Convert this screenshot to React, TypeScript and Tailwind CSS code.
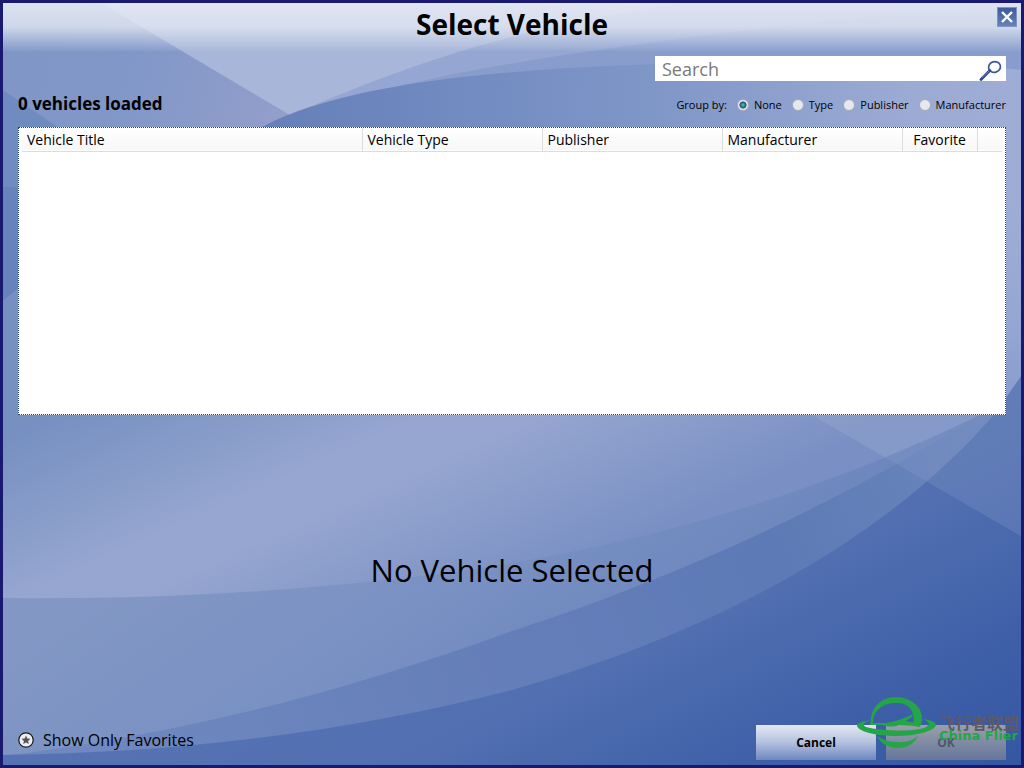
import React, { useState } from "react";

const GROUPS = ["None", "Type", "Publisher", "Manufacturer"];

const COLUMNS = [
	{ title: "Vehicle Title", className: "w-[340px] pl-[5px] text-left" },
	{ title: "Vehicle Type", className: "w-[180px] pl-[5px] text-left" },
	{ title: "Publisher", className: "w-[180px] pl-[5px] text-left" },
	{ title: "Manufacturer", className: "w-[180px] pl-[5px] text-left" },
	{ title: "Favorite", className: "w-[75px] text-center" },
];

function Backdrop() {
	return (
		<svg
			className="absolute inset-0 w-full h-full"
			viewBox="3 3 1018 762"
			preserveAspectRatio="none"
			aria-hidden="true">
			<defs>
				<linearGradient id="sky" gradientUnits="userSpaceOnUse" x1="0" y1="40" x2="300" y2="130">
					<stop offset="0" stopColor="#7f96c7" />
					<stop offset="0.4" stopColor="#8097c8" />
					<stop offset="1" stopColor="#959fcb" />
				</linearGradient>
				<linearGradient id="upper" gradientUnits="userSpaceOnUse" x1="20" y1="430" x2="164" y2="750">
					<stop offset="0" stopColor="#7690c1" />
					<stop offset="0.44" stopColor="#96a6d0" />
					<stop offset="0.56" stopColor="#96a6d0" />
					<stop offset="1" stopColor="#7a90c4" />
				</linearGradient>
				<linearGradient id="band1" gradientUnits="userSpaceOnUse" x1="150" y1="560" x2="350" y2="860">
					<stop offset="0" stopColor="#8297c4" />
					<stop offset="0.5" stopColor="#7a91c3" />
					<stop offset="1" stopColor="#6b86bc" />
				</linearGradient>
				<linearGradient id="band2" gradientUnits="userSpaceOnUse" x1="100" y1="750" x2="980" y2="430">
					<stop offset="0" stopColor="#6f88bf" />
					<stop offset="0.45" stopColor="#647eb9" />
					<stop offset="0.75" stopColor="#5d7ab6" />
					<stop offset="1" stopColor="#6b86bc" />
				</linearGradient>
				<linearGradient id="deep" gradientUnits="userSpaceOnUse" x1="500" y1="560" x2="700" y2="960">
					<stop offset="0" stopColor="#5572b3" />
					<stop offset="0.3" stopColor="#5270b1" />
					<stop offset="0.65" stopColor="#3f60a9" />
					<stop offset="1" stopColor="#3155a0" />
				</linearGradient>
				<linearGradient id="wing" gradientUnits="userSpaceOnUse" x1="300" y1="120" x2="1020" y2="140">
					<stop offset="0" stopColor="#6781ba" />
					<stop offset="0.5" stopColor="#8097c8" />
					<stop offset="0.85" stopColor="#9cabd4" />
					<stop offset="1" stopColor="#9fadd5" />
				</linearGradient>
				<linearGradient id="edge" x1="0" y1="0" x2="0" y2="1">
					<stop offset="0" stopColor="#a0aed6" stopOpacity="0" />
					<stop offset="1" stopColor="#869ccb" />
				</linearGradient>
			</defs>
			<rect x="0" y="0" width="1024" height="768" fill="url(#sky)" />
			<path d="M0 88L62 130V768H0Z" fill="#708bc0" />
			<path d="M0 187H62V310H0Z" fill="#6783bb" />
			<path d="M96 0L310 127H1024V0Z" fill="#a8b7d9" />
			<path d="M262 127C360 85 420 62 500 40C570 20 640 10 700 0H1024V200H262Z" fill="#94a6d1" />
			<path d="M262 127C400 75 560 55 700 36C840 18 920 12 1024 8V200H262Z" fill="#889dcc" />
			<path d="M262 127C350 80 520 69 655 64C780 58 920 62 1024 70V420H262Z" fill="url(#wing)" />
			<path d="M1000 150H1024V410H1000Z" fill="url(#edge)" />
			<path d="M0 303L200 140H262V410H1024V768H0Z" fill="url(#upper)" />
			<path d="M812 415L1024 538V410H812Z" fill="#9badd4" fillOpacity="0.3" />
			<path d="M0 598C160 600 300 591 440 574C660 545 850 480 985 412L1024 400V768H0Z" fill="url(#band1)" />
			<path d="M0 756C180 735 350 690 512 631C700 570 860 490 985 412L1024 400V768H0Z" fill="url(#band2)" />
			<path d="M0 755C180 753 350 732 512 690C740 625 900 525 996 412L1024 372V768H0Z" fill="url(#deep)" />
			<path d="M812 415L1024 538V372L996 412Z" fill="#8ba0cc" fillOpacity="0.25" />
		</svg>
	);
}

function SearchIcon() {
	return (
		<svg className="w-6 h-6" viewBox="0 0 24 24" fill="none" aria-hidden="true">
			<ellipse cx="16.500" cy="10" rx="6" ry="5.300" stroke="#3c5596" strokeWidth="1.700" transform="rotate(-15 16.500 10)" />
			<path d="M11.800 13.500L3 22.500" stroke="#2f4a8c" strokeWidth="2.800" strokeLinecap="round" />
			<path d="M11 14L4 20.500" stroke="#8fa3cd" strokeWidth="0.700" />
		</svg>
	);
}

function Watermark() {
	return (
		<div className="absolute right-[2px] bottom-[15px] flex items-end gap-[3px] pointer-events-none">
			<svg className="w-20 h-14" viewBox="856 694 80 56" fill="none" aria-hidden="true">
				<g fill="#23a548">
					<path d="M871 725C869 709 880 697 896 697C912 697 924 709 922 721L920 727L913 726C916 713 910 703 897 703C883 702 872 711 873 725Z" />
					<path d="M877 736C881 744 888 748 898 748C907 748 914 744 918 736C912 741 905 743 898 742C890 742 883 740 877 736Z" />
					<path d="M871 720C863 721 857 723 857 726C859 732 877 736 896 736C916 736 935 731 936 725C936 722 930 720 923 719C930 722 931 725 924 728C910 732 880 731 866 727C861 724 865 722 871 720Z" />
					<path d="M870 723H884C895 722 905 718 913 714L912 717L906 721L916 723V726L899 725C893 728 885 726 882 725H870Z" />
				</g>
			</svg>
			<div className="flex flex-col pb-2 whitespace-nowrap">
				<span className="font-['Noto_Sans_CJK_SC',sans-serif] text-[16px] leading-4 font-bold text-[#5d5968]">飞行者联盟</span>
				<span className="font-['DejaVu_Sans',sans-serif] text-[13px] leading-3 font-bold text-[#23a548]">China Flier</span>
			</div>
		</div>
	);
}

export default function App() {
	const [search, setSearch] = useState("");
	const [groupBy, setGroupBy] = useState("None");
	const [onlyFavorites, setOnlyFavorites] = useState(false);

	return (
		<div className="relative min-h-screen flex flex-col border-3 border-[#19196f] overflow-hidden font-['Open_Sans',sans-serif] text-black">
			<Backdrop />

			<header className="relative h-12 flex items-start justify-center bg-linear-to-b from-[#e6eaf5]/90 via-[#e2e7f2]/80 via-50% to-[#b4c2de]/10">
				<h1 className="text-[28px] leading-[42px] font-bold">Select Vehicle</h1>
				<button
					aria-label="Close"
					className="absolute right-1 top-1 w-5 h-5 flex items-center justify-center bg-linear-to-b from-[#3d5a9e] to-[#6683b8] border border-[#7e95c2] cursor-pointer">
					<svg className="w-3 h-3" viewBox="0 0 12 12" aria-hidden="true">
						<path d="M1 1L11 11M11 1L1 11" stroke="white" strokeWidth="2.400" />
					</svg>
				</button>
			</header>

			<main className="relative flex-1 flex flex-col px-[15px] pt-[5px]">
				<div className="flex items-end justify-between">
					<h2 className="text-[17px] leading-6 font-bold pb-[11px]">0 vehicles loaded</h2>
					<div>
						<div className="w-[351px] h-[25px] ml-auto flex items-center bg-white pr-1">
							<input
								aria-label="Search"
								placeholder="Search"
								value={search}
								onChange={(e) => setSearch(e.target.value)}
								className="flex-1 min-w-0 pl-[7px] text-[18px] leading-6 outline-none placeholder:text-[#7a7a7a]"
							/>
							<SearchIcon />
						</div>
						<fieldset className="flex items-center justify-end gap-[10px] h-[46px] pt-[2px] text-[11px]">
							<span>Group by:</span>
							{GROUPS.map((group) => (
								<label key={group} className="flex items-center gap-[5px]">
									<input
										type="radio"
										name="group"
										checked={groupBy === group}
										onChange={() => setGroupBy(group)}
										className="appearance-none w-3 h-3 rounded-full border border-[#a3a9b8] bg-[#e6e8ed] checked:bg-radial checked:from-[#3fb0b5] checked:from-10% checked:via-[#1f5468] checked:via-45% checked:to-[#e6e8ed] checked:to-55%"
									/>
									{group}
								</label>
							))}
						</fieldset>
					</div>
				</div>

				<div className="h-[288px] bg-white border border-dotted border-[#24407a] px-[3px]">
					<table className="w-full table-fixed border-collapse text-[14px]">
						<thead>
							<tr className="h-[23px] border-b border-[#dcdcdc] bg-linear-to-b from-white to-[#f7f7f7]">
								{COLUMNS.map((column) => (
									<th
										key={column.title}
										className={`${column.className} p-0 pt-px font-normal border-r border-[#dcdcdc] leading-5`}>
										{column.title}
									</th>
								))}
								<th></th>
							</tr>
						</thead>
						<tbody></tbody>
					</table>
				</div>

				<div className="flex-1 flex items-center justify-center text-[31px]">
					No Vehicle Selected
				</div>

				<footer className="flex items-end justify-between pb-[5px]">
					<label className="flex items-center gap-[9px] pb-2 text-[16px] leading-6">
						<input
							type="checkbox"
							className="sr-only"
							checked={onlyFavorites}
							onChange={(e) => setOnlyFavorites(e.target.checked)}
						/>
						<svg className="w-4 h-4" viewBox="0 0 16 16" aria-hidden="true">
							<circle cx="8" cy="8" r="7.200" fill="#eceef2" stroke="#1a1a1a" strokeWidth="1.200" />
							<path d="M8 3.500L9.300 6.500L12.500 6.800L10.100 8.900L10.800 12L8 10.400L5.200 12L5.900 8.900L3.500 6.800L6.700 6.500Z" fill="#555" />
						</svg>
						Show Only Favorites
					</label>
					<div className="flex gap-[10px] text-[12px] font-bold">
						<button className="w-[120px] h-[35px] bg-linear-to-b from-[#e4e8f3] via-[#b4c1df] to-[#6d87bf] cursor-pointer">
							Cancel
						</button>
						<button disabled className="w-[120px] h-[35px] bg-linear-to-b from-[#9b9fa9] to-[#65769b] text-[#4f5768]">
							OK
						</button>
					</div>
				</footer>
			</main>

			<Watermark />
		</div>
	);
}
